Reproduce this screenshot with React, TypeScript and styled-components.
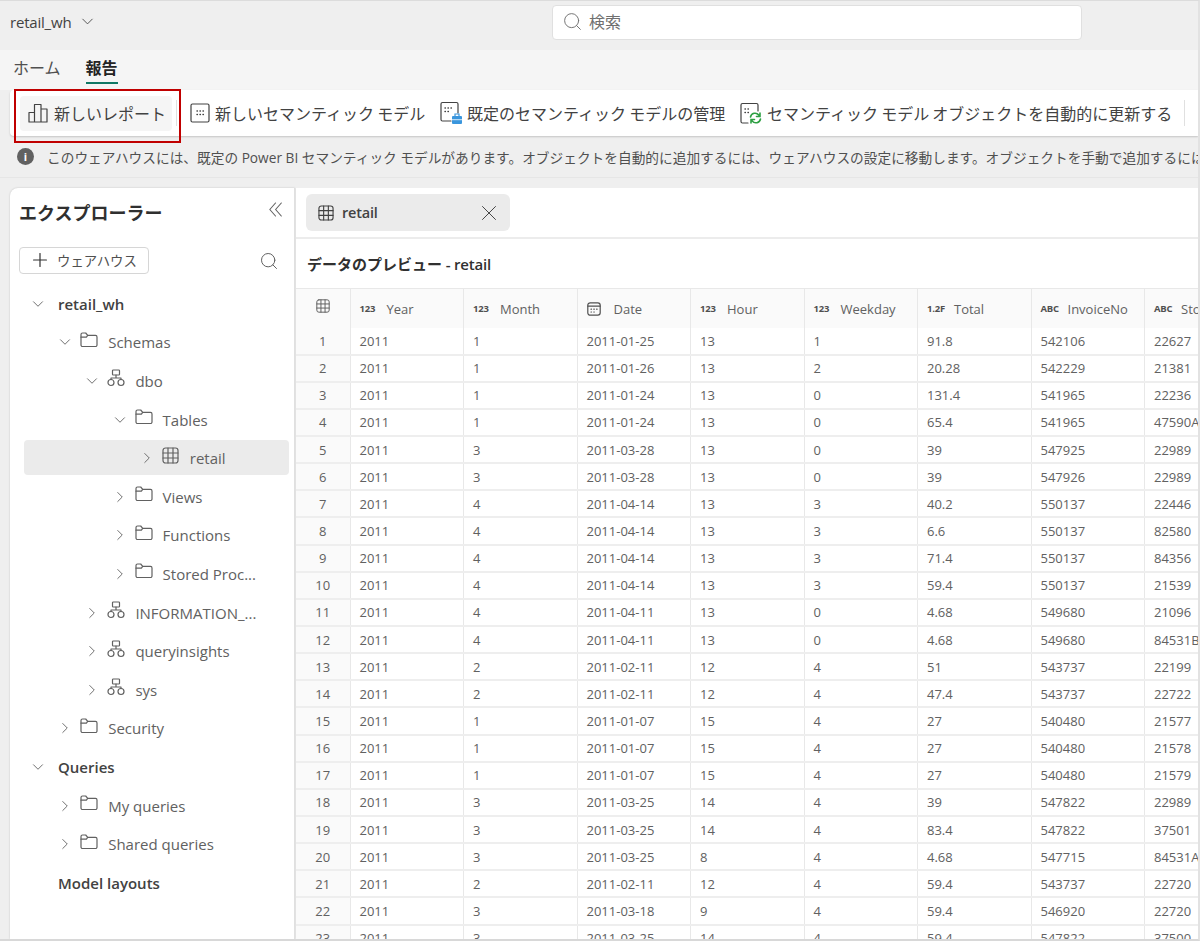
import React from "react";
import styled, { createGlobalStyle } from "styled-components";
import { ChevronDown, ChevronRight, Plus, Search, X } from "lucide-react";

const Global = createGlobalStyle`
  html, body { margin: 0; padding: 0; background: #efefef; }
  * { box-sizing: border-box; }
  body { font-family: "Open Sans", "Noto Sans CJK JP", sans-serif; color: #424242; }
`;

const Page = styled.div`
  position: relative;
  width: 1200px;
  height: 941px;
  overflow: hidden;
  display: flex;
  flex-direction: column;
  background: #efefef;
  border-top: 1px solid #dcdcdc;
  border-right: 2px solid #e2e2e2;
  border-bottom: 2px solid #d8d8d8;
`;
const TopBar = styled.header`
  height: 49px;
  flex: none;
  display: flex;
  align-items: center;
  justify-content: space-between;
  padding: 0 116px 6px 10px;
`;
const WorkspaceName = styled.div`
  display: flex;
  align-items: center;
  gap: 7px;
  padding-bottom: 2px;
  font-size: 15px;
  letter-spacing: -0.2px;
  color: #424242;
`;
const SearchBox = styled.div`
  width: 530px;
  height: 35px;
  display: flex;
  align-items: center;
  gap: 6px;
  padding: 0 0 3px 9px;
  background: #fff;
  border: 1px solid #e0e0e0;
  border-radius: 4px;
  font-size: 16px;
  color: #707070;
`;
const TabRow = styled.nav`
  height: 40px;
  flex: none;
  display: flex;
  gap: 25px;
  padding-left: 13px;
  background: #f5f5f5;
`;
const Tab = styled.div<{ $active?: boolean }>`
  height: 34px;
  padding-top: 7px;
  font-size: 16px;
  line-height: 22px;
  font-weight: ${(p) => (p.$active ? 700 : 400)};
  color: ${(p) => (p.$active ? "#242424" : "#505050")};
  border-bottom: 2px solid ${(p) => (p.$active ? "#117865" : "transparent")};
`;
const Toolbar = styled.div`
  height: 46px;
  flex: none;
  margin-left: 10px;
  display: flex;
  align-items: center;
  padding-left: 10px;
  background: #fff;
  border-radius: 4px 0 0 4px;
  box-shadow: 0 1px 2px rgba(0, 0, 0, 0.18);
`;
const ToolButton = styled.div<{ $active?: boolean; $width: number }>`
  width: ${(p) => p.$width}px;
  height: 35px;
  flex: none;
  display: flex;
  align-items: center;
  gap: ${(p) => (p.$active ? 6 : 5)}px;
  padding-left: ${(p) => (p.$active ? 8 : 0)}px;
  font-size: 16px;
  word-spacing: -1px;
  white-space: nowrap;
  color: #424242;
  background: ${(p) => (p.$active ? "#f5f5f5" : "transparent")};
  border-radius: 4px;
`;
const ToolDivider = styled.div<{ $gapLeft: number; $gapRight: number }>`
  width: 1px;
  height: 26px;
  flex: none;
  background: #e0e0e0;
  margin: 0 ${(p) => p.$gapRight}px 0 ${(p) => p.$gapLeft}px;
`;
const InfoBar = styled.div`
  height: 42px;
  flex: none;
  display: flex;
  align-items: center;
  gap: 13px;
  padding: 0 0 0 17px;
  font-size: 13.7px;
  white-space: nowrap;
  overflow: hidden;
  color: #505050;
  border-bottom: 1px solid #e6e6e6;
`;
const InfoDot = styled.div`
  width: 17px;
  height: 17px;
  flex: none;
  display: flex;
  align-items: center;
  justify-content: center;
  border-radius: 50%;
  background: #616161;
  color: #fff;
  font-size: 11px;
  font-weight: 700;
`;
const Body = styled.div`
  flex: 1;
  min-height: 0;
  display: flex;
  padding: 10px 0 0 10px;
`;
const Explorer = styled.aside`
  width: 285px;
  flex: none;
  background: #fff;
  border-radius: 8px 0 0 0;
  border-right: 1px solid #e0e0e0;
  box-shadow: 0 0 2px rgba(0, 0, 0, 0.2);
  padding-top: 13px;
`;
const ExplorerHead = styled.div`
  display: flex;
  align-items: center;
  justify-content: space-between;
  padding: 0 12px 0 9px;
  height: 22px;
`;
const ExplorerTitle = styled.h2`
  margin: 0;
  font-size: 18px;
  font-weight: 700;
  color: #303030;
`;
const CollapseGlyph = styled.svg`
  margin-bottom: 5px;
  color: #616161;
`;
const ActionRow = styled.div`
  display: flex;
  align-items: center;
  justify-content: space-between;
  margin-top: 24px;
  padding: 0 15px 0 9px;
  color: #616161;
`;
const AddButton = styled.div`
  width: 130px;
  height: 27px;
  display: flex;
  align-items: center;
  gap: 6px;
  padding: 0 0 2px 9px;
  border: 1px solid #d6d6d6;
  border-radius: 4px;
  font-size: 13.4px;
  color: #505050;
`;
const AddGlyph = styled.span`
  display: flex;
  color: #303030;
`;
const Tree = styled.div`
  margin-top: 10px;
  padding: 0 5px 0 14px;
`;
const TreeRow = styled.div<{ $level: number; $selected?: boolean }>`
  height: ${(p) => (p.$selected ? 35 : 38.6)}px;
  margin: ${(p) => (p.$selected ? 1.8 : 0)}px 0;
  display: flex;
  align-items: center;
  padding: 1px 0 0 ${(p) => 7 + p.$level * 27.2}px;
  border-radius: 4px;
  color: #616161;
  font-size: 15px;
  white-space: nowrap;
  background: ${(p) => (p.$selected ? "#ebebeb" : "none")};
`;
const ChevronSlot = styled.span`
  width: 14px;
  flex: none;
  display: flex;
  justify-content: center;
  color: #616161;
  svg {
    flex: none;
  }
`;
const NodeIcon = styled.span`
  width: 18px;
  height: 18px;
  margin: 0 10px 5px 8px;
  flex: none;
  display: flex;
  color: #616161;
`;
const RootLabel = styled.span`
  margin-left: 13px;
  font-weight: 600;
  color: #424242;
`;
const Main = styled.main`
  flex: 1;
  min-width: 0;
  display: flex;
  flex-direction: column;
  background: #fff;
  margin-left: 1px;
  overflow: hidden;
`;
const TabStrip = styled.div`
  height: 51px;
  flex: none;
  padding: 6px 0 0 10px;
  border-bottom: 2px solid #ececec;
`;
const OpenTab = styled.div`
  width: 204px;
  height: 37px;
  display: flex;
  align-items: center;
  gap: 8px;
  padding: 0 8px 0 12px;
  background: #ebebeb;
  border-radius: 6px;
  font-size: 14.5px;
  font-weight: 600;
  letter-spacing: -0.2px;
  color: #424242;
`;
const OpenTabLabel = styled.span`
  flex: 1;
`;
const PreviewTitle = styled.div`
  height: 49px;
  flex: none;
  display: flex;
  align-items: center;
  padding-left: 11px;
  font-size: 15px;
  font-weight: 700;
  color: #303030;
`;
const TitleSuffix = styled.span`
  font-weight: 600;
  letter-spacing: -0.2px;
  white-space: pre;
`;
const Grid = styled.table`
  table-layout: fixed;
  width: 962px;
  flex: none;
  border-collapse: collapse;
  border-top: 1px solid #e8e8e8;
`;
const Head = styled.th<{ $w: number }>`
  width: ${(p) => p.$w}px;
  height: 39px;
  padding: 1px 0 0 9px;
  background: #fafafa;
  border-right: 1px solid #e8e8e8;
  font-size: 13px;
  font-weight: 400;
  text-align: left;
  color: #616161;
  white-space: nowrap;
  overflow: hidden;
`;
const IndexHead = styled(Head)`
  padding: 0;
  text-align: center;
`;
const HeadInner = styled.div`
  display: flex;
  align-items: center;
`;
const TypeBadge = styled.span`
  width: 27px;
  flex: none;
  display: flex;
  font-size: 9.5px;
  font-weight: 700;
  letter-spacing: -0.2px;
  color: #505050;
`;
const Row = styled.tr`
  height: 27.15px;
`;
const Cell = styled.td`
  padding: 0 0 0 9px;
  border-right: 1px solid #e8e8e8;
  border-bottom: 2px solid #eeeeee;
  font-size: 13px;
  color: #616161;
  white-space: nowrap;
  overflow: hidden;
`;
const IndexCell = styled(Cell)`
  padding: 0;
  text-align: center;
  background: #fafafa;
`;
const Annotation = styled.div`
  position: absolute;
  left: 14px;
  top: 88px;
  width: 167px;
  height: 54px;
  border: 2px solid #c00000;
  pointer-events: none;
`;

const line = { fill: "none", stroke: "currentColor", strokeWidth: 1.2, strokeLinejoin: "round" as const, strokeLinecap: "round" as const };

const FolderIcon = () => (
  <svg width="18" height="18" viewBox="0 0 18 18" {...line}>
    <path d="M1 3.5a1.5 1.5 0 0 1 1.5-1.5h3.2l2 2.4h7.8a1.5 1.5 0 0 1 1.5 1.5v8.1a1.5 1.5 0 0 1-1.5 1.5h-13A1.5 1.5 0 0 1 1 14z" />
    <path d="M1 6.2h5.4l1.3-1.8" />
  </svg>
);
const SchemaIcon = () => (
  <svg width="18" height="18" viewBox="0 0 18 18" {...line}>
    <rect x="5.5" y="1" width="7" height="5" rx="0.8" />
    <circle cx="4" cy="13.5" r="3" />
    <circle cx="14" cy="13.5" r="3" />
    <path d="M9 6v3M4 10.5V9h10v1.5" />
  </svg>
);
const TableIcon = ({ size = 17 }: { size?: number }) => (
  <svg width={size} height={size} viewBox="0 0 17 17" {...line}>
    <rect x="1" y="1" width="15" height="15" rx="2.5" />
    <path d="M6 1v15M11 1v15M1 6h15M1 11h15" />
  </svg>
);
const CalendarIcon = () => (
  <svg width="14" height="14" viewBox="0 0 14 14" {...line}>
    <rect x="0.8" y="0.8" width="12.4" height="12.4" rx="2.4" />
    <path d="M1 4.2h12" />
    <path d="M4 7.2h.5M6.8 7.2h.5M9.6 7.2h.5M4 10h.5M6.8 10h.5" />
  </svg>
);
const ReportIcon = () => (
  <svg width="20" height="22" viewBox="0 0 20 22" {...line}>
    <path d="M1 20V10.5h5.5V20zM6.5 20V2.5H13V20zM13 20V7h6v13z" />
  </svg>
);
const ModelIcon = () => (
  <svg width="20" height="20" viewBox="0 0 20 20" {...line}>
    <rect x="1" y="1" width="18" height="18" rx="1.5" />
    <path d="M7 8h.4M10 8h.4M13 8h.4M7 11.5h.4M10 11.5h.4M13 11.5h.4" strokeWidth="1.4" />
  </svg>
);
const ManageIcon = () => (
  <svg width="22" height="24" viewBox="0 0 22 24">
    <g {...line}>
      <path d="M11 20H2.5A1.5 1.5 0 0 1 1 18.500V3a1.500 1.500 0 0 1 1.500-1.500h14A1.500 1.500 0 0 1 18 3v9" />
      <path d="M5 7h.4M8 7h.4M11 7h.4M5 10.500h.4M8 10.500h.4" strokeWidth="1.400" />
    </g>
    <rect x="12" y="15" width="10" height="8" rx="1" fill="#3a96dd" />
    <path d="M15 15v-2h4v2" fill="none" stroke="#3a96dd" strokeWidth="1.200" />
    <path d="M12 18.700h10" stroke="#fff" strokeWidth="0.800" />
  </svg>
);
const RefreshIcon = () => (
  <svg width="22" height="24" viewBox="0 0 22 24">
    <g {...line}>
      <path d="M8 22H2.500A1.500 1.500 0 0 1 1 20.500V4a1.500 1.500 0 0 1 1.500-1.500h14A1.500 1.500 0 0 1 18 4v6" />
      <path d="M5 8h.4M8 8h.4M5 11.500h.4M8 11.500h.4" strokeWidth="1.400" />
    </g>
    <g fill="none" stroke="#2ea043" strokeWidth="1.600" strokeLinecap="round">
      <path d="M10.500 16a4.700 4.700 0 0 1 8.300-2l1.200 1.500M20 12v3.500h-3.500" />
      <path d="M20.500 18a4.700 4.700 0 0 1-8.300 2L11 18.500M11 22v-3.500h3.500" />
    </g>
  </svg>
);
const CollapseIcon = () => (
  <CollapseGlyph width="13" height="15" viewBox="0 0 13 15" {...line} strokeWidth={1.1}>
    <path d="M6.500 1 .8 7.500l5.700 6.500M12.300 1 6.600 7.500l5.700 6.500" />
  </CollapseGlyph>
);

type Kind = "folder" | "schema" | "table" | "root";
type Node = { label: string; level: number; kind: Kind; open?: boolean; leaf?: boolean; selected?: boolean };

const nodes: Node[] = [
  { label: "retail_wh", level: 0, kind: "root", open: true },
  { label: "Schemas", level: 1, kind: "folder", open: true },
  { label: "dbo", level: 2, kind: "schema", open: true },
  { label: "Tables", level: 3, kind: "folder", open: true },
  { label: "retail", level: 4, kind: "table", selected: true },
  { label: "Views", level: 3, kind: "folder" },
  { label: "Functions", level: 3, kind: "folder" },
  { label: "Stored Proc...", level: 3, kind: "folder" },
  { label: "INFORMATION_...", level: 2, kind: "schema" },
  { label: "queryinsights", level: 2, kind: "schema" },
  { label: "sys", level: 2, kind: "schema" },
  { label: "Security", level: 1, kind: "folder" },
  { label: "Queries", level: 0, kind: "root", open: true },
  { label: "My queries", level: 1, kind: "folder" },
  { label: "Shared queries", level: 1, kind: "folder" },
  { label: "Model layouts", level: 0, kind: "root", leaf: true },
];

const nodeIcon = (kind: Kind) => {
  if (kind === "folder") return <FolderIcon />;
  if (kind === "schema") return <SchemaIcon />;
  return <TableIcon />;
};

const columns: { label: string; badge?: string }[] = [
  { label: "Year", badge: "123" },
  { label: "Month", badge: "123" },
  { label: "Date" },
  { label: "Hour", badge: "123" },
  { label: "Weekday", badge: "123" },
  { label: "Total", badge: "1.2F" },
  { label: "InvoiceNo", badge: "ABC" },
  { label: "StockCode", badge: "ABC" },
];

const rows: string[] = [
  "2011 1 2011-01-25 13 1 91.8 542106 22627",
  "2011 1 2011-01-26 13 2 20.28 542229 21381",
  "2011 1 2011-01-24 13 0 131.4 541965 22236",
  "2011 1 2011-01-24 13 0 65.4 541965 47590A",
  "2011 3 2011-03-28 13 0 39 547925 22989",
  "2011 3 2011-03-28 13 0 39 547926 22989",
  "2011 4 2011-04-14 13 3 40.2 550137 22446",
  "2011 4 2011-04-14 13 3 6.6 550137 82580",
  "2011 4 2011-04-14 13 3 71.4 550137 84356",
  "2011 4 2011-04-14 13 3 59.4 550137 21539",
  "2011 4 2011-04-11 13 0 4.68 549680 21096",
  "2011 4 2011-04-11 13 0 4.68 549680 84531B",
  "2011 2 2011-02-11 12 4 51 543737 22199",
  "2011 2 2011-02-11 12 4 47.4 543737 22722",
  "2011 1 2011-01-07 15 4 27 540480 21577",
  "2011 1 2011-01-07 15 4 27 540480 21578",
  "2011 1 2011-01-07 15 4 27 540480 21579",
  "2011 3 2011-03-25 14 4 39 547822 22989",
  "2011 3 2011-03-25 14 4 83.4 547822 37501",
  "2011 3 2011-03-25 8 4 4.68 547715 84531A",
  "2011 2 2011-02-11 12 4 59.4 543737 22720",
  "2011 3 2011-03-18 9 4 59.4 546920 22720",
  "2011 3 2011-03-25 14 4 59.4 547822 37500",
];

export default function App() {
  return (
    <Page>
      <Global />
      <TopBar>
        <WorkspaceName>
          retail_wh <ChevronDown size={19} strokeWidth={1.1} />
        </WorkspaceName>
        <SearchBox>
          <Search size={21} strokeWidth={1.1} />
          検索
        </SearchBox>
      </TopBar>
      <TabRow>
        <Tab>ホーム</Tab>
        <Tab $active>報告</Tab>
      </TabRow>
      <Toolbar>
        <ToolButton $active $width={152}>
          <ReportIcon />
          新しいレポート
        </ToolButton>
        <ToolDivider $gapLeft={4} $gapRight={13} />
        <ToolButton $width={250}>
          <ModelIcon />
          新しいセマンティック モデル
        </ToolButton>
        <ToolButton $width={300}>
          <ManageIcon />
          既定のセマンティック モデルの管理
        </ToolButton>
        <ToolButton $width={444}>
          <RefreshIcon />
          セマンティック モデル オブジェクトを自動的に更新する
        </ToolButton>
        <ToolDivider $gapLeft={0} $gapRight={0} />
      </Toolbar>
      <InfoBar>
        <InfoDot>i</InfoDot>
        このウェアハウスには、既定の Power BI セマンティック モデルがあります。オブジェクトを自動的に追加するには、ウェアハウスの設定に移動します。オブジェクトを手動で追加するには
      </InfoBar>
      <Body>
        <Explorer>
          <ExplorerHead>
            <ExplorerTitle>エクスプローラー</ExplorerTitle>
            <CollapseIcon />
          </ExplorerHead>
          <ActionRow>
            <AddButton>
              <AddGlyph>
                <Plus size={22} strokeWidth={1.3} />
              </AddGlyph>
              ウェアハウス
            </AddButton>
            <Search size={20} strokeWidth={1.2} />
          </ActionRow>
          <Tree>
            {nodes.map((n) => (
              <TreeRow key={n.label} $level={n.level} $selected={n.selected}>
                <ChevronSlot>
                  {n.leaf ? null : n.open ? (
                    <ChevronDown size={18} strokeWidth={1.2} />
                  ) : (
                    <ChevronRight size={18} strokeWidth={1.2} />
                  )}
                </ChevronSlot>
                {n.kind === "root" ? (
                  <RootLabel>{n.label}</RootLabel>
                ) : (
                  <>
                    <NodeIcon>{nodeIcon(n.kind)}</NodeIcon>
                    {n.label}
                  </>
                )}
              </TreeRow>
            ))}
          </Tree>
        </Explorer>
        <Main>
          <TabStrip>
            <OpenTab>
              <TableIcon size={16} />
              <OpenTabLabel>retail</OpenTabLabel>
              <X size={26} strokeWidth={0.9} />
            </OpenTab>
          </TabStrip>
          <PreviewTitle>
            データのプレビュー<TitleSuffix> - retail</TitleSuffix>
          </PreviewTitle>
          <Grid>
            <thead>
              <tr>
                <IndexHead as="th" $w={54}>
                  <TableIcon size={14} />
                </IndexHead>
                {columns.map((c) => (
                  <Head key={c.label} $w={113.5}>
                    <HeadInner>
                      {c.badge ? <TypeBadge>{c.badge}</TypeBadge> : <TypeBadge><CalendarIcon /></TypeBadge>}
                      {c.label}
                    </HeadInner>
                  </Head>
                ))}
              </tr>
            </thead>
            <tbody>
              {rows.map((r, i) => (
                <Row key={i}>
                  <IndexCell>{i + 1}</IndexCell>
                  {r.split(" ").map((v, j) => (
                    <Cell key={j}>{v}</Cell>
                  ))}
                </Row>
              ))}
            </tbody>
          </Grid>
        </Main>
      </Body>
      <Annotation />
    </Page>
  );
}
